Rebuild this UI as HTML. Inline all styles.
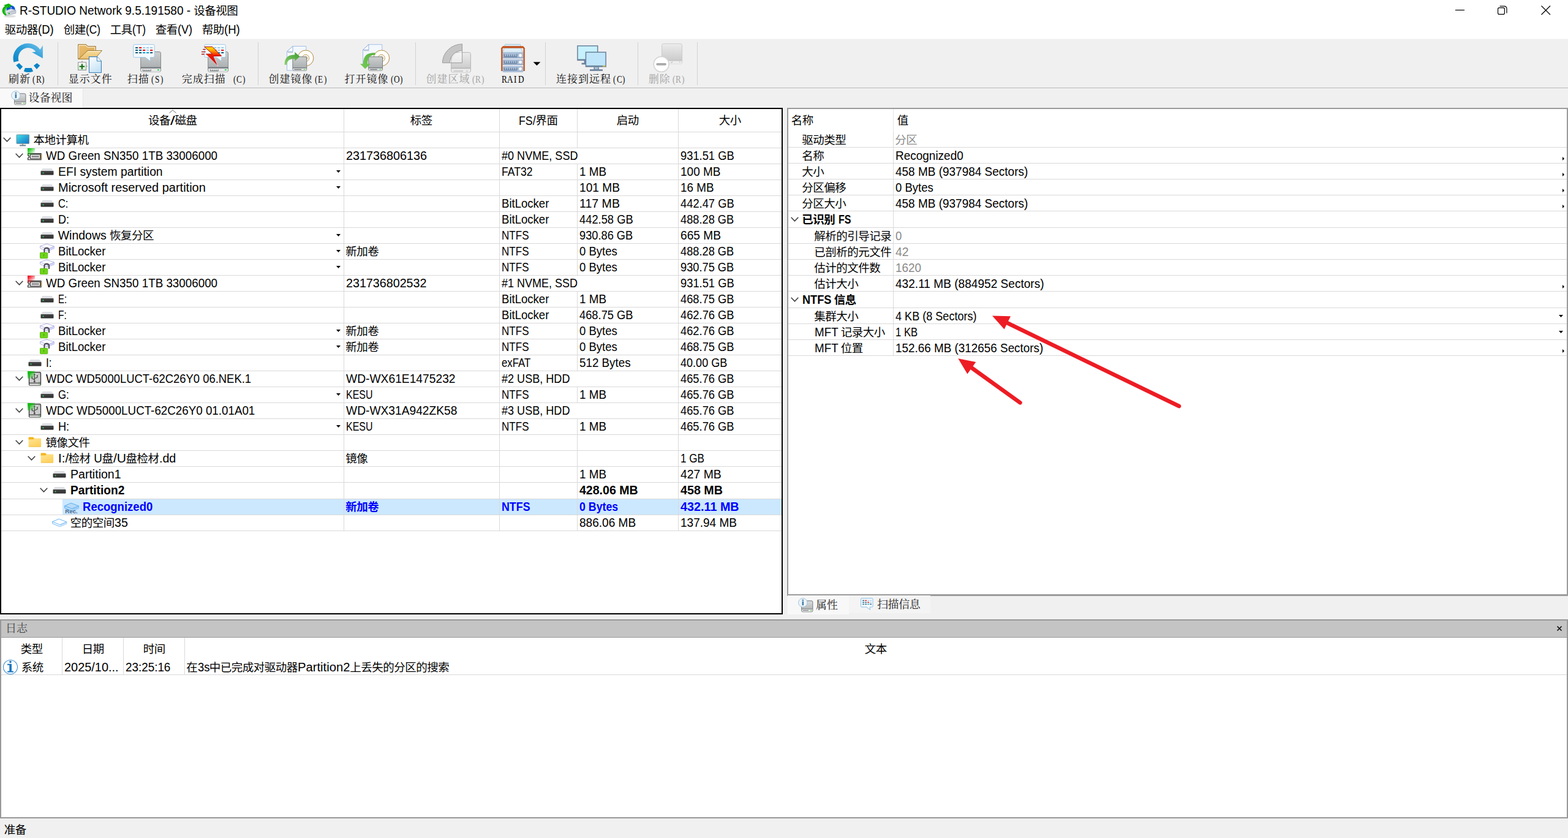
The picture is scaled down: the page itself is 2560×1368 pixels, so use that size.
<!DOCTYPE html>
<html lang="zh"><head><meta charset="utf-8"><title>R-STUDIO Network</title>
<style>
html,body{margin:0;padding:0}
body{width:2560px;height:1368px;position:relative;overflow:hidden;background:#fff;font-family:"Liberation Sans",sans-serif;font-size:19.5px;color:#000}
body>div,body>span,body>svg{position:absolute}
body>span{white-space:pre;line-height:24px;height:24px;transform-origin:0 0;display:block}
body>svg{overflow:visible}
body>span.cj{font-family:"Liberation Sans","Noto Sans CJK SC",sans-serif;font-size:18.5px;letter-spacing:-0.5px}
body>span.cs{font-family:"Liberation Serif","Noto Serif CJK SC",serif;font-size:17px;letter-spacing:1px;color:#111}
body>span.ct{font-family:"Liberation Serif","Noto Serif CJK SC",serif;font-size:18px;color:#222}
</style></head><body>
<div style="left:0px;top:63px;width:2560px;height:1px;background:#f8f8f8;"></div>
<div style="left:0px;top:64px;width:2560px;height:80px;background:#f0f0f0;"></div>
<div style="left:0px;top:143px;width:2560px;height:1px;background:#b9b9b9;"></div>
<div style="left:0px;top:144px;width:2560px;height:32px;background:#f0f0f0;"></div>
<div style="left:0px;top:144.5px;width:135px;height:30.5px;background:#f9f9f9;"></div>
<div style="left:0px;top:175px;width:135px;height:1px;background:#fff;"></div>
<div style="left:135px;top:145px;width:1px;height:30px;background:#e6e6e6;"></div>
<div style="left:1278px;top:176px;width:8px;height:836px;background:#f0f0f0;"></div>
<div style="left:0px;top:176px;width:1278px;height:827px;background:#fff;box-sizing:border-box;border:2px solid #000"></div>
<div style="left:1285px;top:176px;width:1275px;height:797px;background:#fff;box-sizing:border-box;border:2px solid #9b9b9b;border-bottom-width:3px"></div>
<div style="left:1278px;top:973px;width:1282px;height:39px;background:#f0f0f0;"></div>
<div style="left:1286px;top:972px;width:100px;height:31px;background:#f8f8f8;"></div>
<div style="left:1386px;top:972px;width:133px;height:29px;background:#f4f4f4;"></div>
<div style="left:0px;top:1003px;width:1286px;height:9px;background:#f0f0f0;"></div>
<div style="left:0px;top:1011px;width:2560px;height:325px;background:#fff;box-sizing:border-box;border:2px solid #989898"></div>
<div style="left:2px;top:1013px;width:2556px;height:27px;background:#c4c4c4;"></div>
<div style="left:2px;top:1040px;width:2556px;height:1px;background:#9a9a9a;"></div>
<div style="left:0px;top:1336px;width:2560px;height:32px;background:#f0f0f0;"></div>
<span style="left:32px;top:4.6px;font-size:19.6px;transform:scaleX(0.9709);">R-STUDIO Network 9.5.191580 - </span>
<span class="cj" style="left:316.25px;top:6.4px;">设备视图</span>
<svg style="left:2376px;top:9px;" width="160" height="16" viewBox="0 0 160 16"><path d="M0 7.5h15" stroke="#000" stroke-width="1.2" fill="none"/><rect x="69.6" y="3.6" width="10.8" height="10.8" rx="2.2" fill="none" stroke="#000" stroke-width="1.2"/><path d="M72.6 1.1 h7.4 a4 4 0 0 1 4 4 v7.4" fill="none" stroke="#000" stroke-width="1.2"/><path d="M140.5 0.5 l14.5 14.5 M155 0.5 l-14.5 14.5" stroke="#000" stroke-width="1.2" fill="none"/></svg>
<span class="cj" style="left:7.75px;top:36.6px;">驱动器</span>
<span style="left:62px;top:36px;transform:scaleX(0.9446);">(D)</span>
<span class="cj" style="left:103.75px;top:36.6px;">创建</span>
<span style="left:140px;top:36px;transform:scaleX(0.8852);">(C)</span>
<span class="cj" style="left:179.75px;top:36.6px;">工具</span>
<span style="left:216px;top:36px;transform:scaleX(0.8874);">(T)</span>
<span class="cj" style="left:253.75px;top:36.6px;">查看</span>
<span style="left:290px;top:36px;transform:scaleX(0.9248);">(V)</span>
<span class="cj" style="left:329.75px;top:36.6px;">帮助</span>
<span style="left:366px;top:36px;transform:scaleX(0.9510);">(H)</span>
<div style="left:94px;top:69px;width:1px;height:70px;background:#d2d2d2;"></div>
<div style="left:421px;top:69px;width:1px;height:70px;background:#d2d2d2;"></div>
<div style="left:678px;top:69px;width:1px;height:70px;background:#d2d2d2;"></div>
<div style="left:890px;top:69px;width:1px;height:70px;background:#d2d2d2;"></div>
<div style="left:1041px;top:69px;width:1px;height:70px;background:#d2d2d2;"></div>
<div style="left:1138px;top:69px;width:1px;height:70px;background:#d2d2d2;"></div>
<svg style="left:0px;top:0px;" width="1200" height="144" viewBox="0 0 1200 144"><defs><linearGradient id="rf" x1="0" y1="1" x2="1" y2="0"><stop offset="0" stop-color="#0a84c6"/><stop offset="0.55" stop-color="#2f9fd8"/><stop offset="1" stop-color="#78c4ec"/></linearGradient><linearGradient id="dr" x1="0" y1="0" x2="0" y2="1"><stop offset="0" stop-color="#cdcfd0"/><stop offset="1" stop-color="#a4a8aa"/></linearGradient><linearGradient id="drd" x1="0" y1="0" x2="0" y2="1"><stop offset="0" stop-color="#ececec"/><stop offset="1" stop-color="#c4c4c4"/></linearGradient><linearGradient id="fo" x1="0" y1="0" x2="1" y2="1"><stop offset="0" stop-color="#ecc070"/><stop offset="1" stop-color="#d9a653"/></linearGradient><linearGradient id="fo2" x1="0" y1="0" x2="0" y2="1"><stop offset="0" stop-color="#f6dc9a"/><stop offset="1" stop-color="#ecc070"/></linearGradient><linearGradient id="pg" x1="0" y1="0" x2="0.5" y2="1"><stop offset="0" stop-color="#ffffff"/><stop offset="1" stop-color="#c7e3f6"/></linearGradient><linearGradient id="pl" x1="0" y1="0" x2="0" y2="1"><stop offset="0" stop-color="#ffffff"/><stop offset="1" stop-color="#d2f3d0"/></linearGradient><linearGradient id="bo" x1="0" y1="0" x2="0" y2="1"><stop offset="0" stop-color="#ffe600"/><stop offset="0.2" stop-color="#ffa000"/><stop offset="0.45" stop-color="#f01800"/><stop offset="1" stop-color="#c00000"/></linearGradient><linearGradient id="ga" x1="0" y1="1" x2="1" y2="0"><stop offset="0" stop-color="#8fd070"/><stop offset="1" stop-color="#3d9a2f"/></linearGradient><linearGradient id="gb" x1="1" y1="0" x2="0" y2="1"><stop offset="0" stop-color="#58b040"/><stop offset="1" stop-color="#78cc58"/></linearGradient><radialGradient id="cd" cx="0.35" cy="0.3" r="0.9"><stop offset="0" stop-color="#fffdf2"/><stop offset="0.6" stop-color="#ffffff"/><stop offset="1" stop-color="#fbe6e6"/></radialGradient></defs><path d="M22.4 101.6A24.2 24.2 0 0 1 65.4 81L69.9 74V95.2L52.2 85.2L58.4 84.4A16 16.8 0 0 0 30.5 99.5Z" fill="url(#rf)"/><path d="M26.2 106.6L31.1 103L37.2 108.8L32.5 114Z" fill="#0a84c6"/><path d="M55 107L60.3 103L65.3 107L59.9 113Z" fill="#0a84c6"/><path d="M40.9 111H51.5L54.1 116.4Q46.4 119.6 38.8 116.4Z" fill="#0a84c6"/><path d="M127.6 72.6H140.6L143.2 75.6H156.2V96.4H127.6Z" fill="url(#fo)" stroke="#9c7832" stroke-width="1"/><path d="M129 74H140L142.6 77H154.8V83" fill="none" stroke="#fff" stroke-width="1" opacity="0.9"/><path d="M128.6 74V95" stroke="#fff" stroke-width="1" opacity="0.8"/><path d="M143 82.6H166.4L154.6 96.4H128.2Z" fill="url(#fo2)" stroke="#9c7832" stroke-width="1"/><path d="M143.6 83.8H164L162.8 85" fill="none" stroke="#fff" stroke-width="0.9" opacity="0.9"/><path d="M145.5 92.6H158.4L165.4 99.8V118.5H145.5Z" fill="url(#pg)" stroke="#3f7fb2" stroke-width="1.1"/><path d="M158.4 92.6V99.8H165.4" fill="#fff" stroke="#3f7fb2" stroke-width="1"/><rect x="127.6" y="101.8" width="13" height="12.6" fill="url(#pl)" stroke="#8c8c8c" stroke-width="1"/><path d="M129.6 108.6h8.6M133.9 104.2v8.8" stroke="#0b670b" stroke-width="2"/><path d="M134 99.4v2M141.2 108h1.6" stroke="#8c8c8c" stroke-width="1.2"/><rect x="229.7" y="84.5" width="32.8" height="32.8" rx="2.6" fill="url(#dr)" stroke="#868a8c" stroke-width="1"/><rect x="229.7" y="109.6" width="32.8" height="2.2" fill="#70767a"/><path d="M230.2 111.8h31.799999999999997v2.6a3 3 0 0 1-3 3h-25.799999999999997a3 3 0 0 1-3-3z" fill="#e6e8e8"/><path d="M233.5 113.2v2.6h12.6v-2.6M236.6 113.4v2.2M239.8 113.4v2.2M242.9 113.4v2.2" fill="none" stroke="#6c7072" stroke-width="1.1"/><rect x="256.9" y="113.2" width="3" height="1.8" rx="0.5" fill="#19d24a"/><path d="M219.7 72.6h30.5a2 2 0 0 1 2 2v17a2 2 0 0 1-2 2h-4.8v6.2l-8.2-6.2h-17.5a2 2 0 0 1-2-2v-17a2 2 0 0 1 2-2z" fill="#f5fafd" stroke="#9ccbea" stroke-width="1"/><rect x="221.1" y="77.0" width="4.1" height="2" fill="#0b5876"/><rect x="227.1" y="77.0" width="4.1" height="2" fill="#e80000"/><rect x="233.1" y="77.0" width="4.1" height="2" fill="#9ccbe8"/><rect x="239.1" y="77.0" width="4.1" height="2" fill="#9ccbe8"/><rect x="245.1" y="77.0" width="4.1" height="2" fill="#9ccbe8"/><rect x="221.1" y="81.0" width="4.1" height="2" fill="#0b5876"/><rect x="227.1" y="81.0" width="4.1" height="2" fill="#0b5876"/><rect x="233.1" y="81.0" width="4.1" height="2" fill="#e80000"/><rect x="239.1" y="81.0" width="4.1" height="2" fill="#9ccbe8"/><rect x="245.1" y="81.0" width="4.1" height="2" fill="#e80000"/><rect x="221.1" y="85.1" width="4.1" height="2" fill="#0b5876"/><rect x="227.1" y="85.1" width="4.1" height="2" fill="#0b5876"/><rect x="233.1" y="85.1" width="4.1" height="2" fill="#0a9ad2"/><rect x="239.1" y="85.1" width="4.1" height="2" fill="#0a9ad2"/><rect x="245.1" y="85.1" width="4.1" height="2" fill="#0b5876"/><rect x="339.7" y="84.5" width="32.8" height="32.8" rx="2.6" fill="url(#dr)" stroke="#868a8c" stroke-width="1"/><rect x="339.7" y="109.6" width="32.8" height="2.2" fill="#70767a"/><path d="M340.2 111.8h31.799999999999997v2.6a3 3 0 0 1-3 3h-25.799999999999997a3 3 0 0 1-3-3z" fill="#e6e8e8"/><path d="M343.5 113.2v2.6h12.6v-2.6M346.6 113.4v2.2M349.8 113.4v2.2M352.9 113.4v2.2" fill="none" stroke="#6c7072" stroke-width="1.1"/><rect x="366.9" y="113.2" width="3" height="1.8" rx="0.5" fill="#19d24a"/><path d="M335.8 72.6h30.5a2 2 0 0 1 2 2v17a2 2 0 0 1-2 2h-4.8v6.2l-8.2-6.2h-17.5a2 2 0 0 1-2-2v-17a2 2 0 0 1 2-2z" fill="#f5fafd" stroke="#9ccbea" stroke-width="1"/><rect x="349.2" y="77.0" width="4.1" height="2" fill="#9ccbe8"/><rect x="355.2" y="77.0" width="4.1" height="2" fill="#9ccbe8"/><rect x="361.2" y="77.0" width="4.1" height="2" fill="#9ccbe8"/><rect x="349.2" y="81.0" width="4.1" height="2" fill="#e80000"/><rect x="355.2" y="81.0" width="4.1" height="2" fill="#9ccbe8"/><rect x="361.2" y="81.0" width="4.1" height="2" fill="#e80000"/><rect x="349.2" y="85.1" width="4.1" height="2" fill="#0a9ad2"/><rect x="355.2" y="85.1" width="4.1" height="2" fill="#0a9ad2"/><rect x="361.2" y="85.1" width="4.1" height="2" fill="#0b5876"/><path d="M333.8 76.4H346.6L361.6 91.2L348.3 91.7L355.4 107.6L336.2 88.3L346.6 88Z" fill="url(#bo)" stroke="#b00808" stroke-width="1" stroke-linejoin="miter"/><path d="M349 92.6L355.9 108.2L337 89.2" fill="none" stroke="#fff" stroke-width="0.9" opacity="0.85"/><path d="M331.2 80.6h4.6M329 84.7h6.7M329 88.5h4.6" stroke="#b01010" stroke-width="1.3"/><path d="M478 75.5H499.8V115H468.5V84.2Z" fill="#f3f8fd" stroke="#a4c0e6" stroke-width="1"/><path d="M468.5 84.2H478V75.5Z" fill="#fff" stroke="#8fb0dc" stroke-width="1"/><path d="M470 85.6H478.6" stroke="#c6c6c6" stroke-width="1.2"/><circle cx="499" cy="94.9" r="12.9" fill="url(#cd)" stroke="#b08c40" stroke-width="1"/><circle cx="499" cy="94.9" r="5.6" fill="#fff" stroke="#b08c40" stroke-width="0.9"/><circle cx="499" cy="94.9" r="2.8" fill="#f0f0f0" stroke="#b08c40" stroke-width="0.8"/><rect x="477.9" y="92.7" width="22.8" height="22.6" rx="2.2" fill="url(#dr)" stroke="#7c8082" stroke-width="1"/><rect x="478.0" y="110.2" width="22.6" height="1.4" fill="#6e7476"/><path d="M478.4 111.6h21.8v1.6a2 2 0 0 1-2 2h-17.8a2 2 0 0 1-2-2z" fill="#dcdede"/><path d="M480.4 113.4h11.6" stroke="#5e6264" stroke-width="1.1"/><rect x="495.79999999999995" y="112.80000000000001" width="2.6" height="1.2" fill="#5fd64a"/><path d="M464.6 105.8C464.6 95 469 89.8 481.2 89.6V85L489.5 92.3L481.2 99.7V96C472.5 96 468.6 99 468.4 105.8Z" fill="url(#ga)"/><path d="M602 72.7H623.8V106.2H592.5V81.4Z" fill="#f3f8fd" stroke="#a4c0e6" stroke-width="1"/><path d="M592.5 81.4H602V72.7Z" fill="#fff" stroke="#8fb0dc" stroke-width="1"/><path d="M594 82.8H602.6" stroke="#c6c6c6" stroke-width="1.2"/><circle cx="622.8" cy="94.9" r="12.9" fill="url(#cd)" stroke="#b08c40" stroke-width="1"/><circle cx="622.8" cy="94.9" r="5.6" fill="#fff" stroke="#b08c40" stroke-width="0.9"/><circle cx="622.8" cy="94.9" r="2.8" fill="#f0f0f0" stroke="#b08c40" stroke-width="0.8"/><rect x="601.7" y="92.7" width="22.8" height="22.6" rx="2.2" fill="url(#dr)" stroke="#7c8082" stroke-width="1"/><rect x="601.8000000000001" y="110.2" width="22.6" height="1.4" fill="#6e7476"/><path d="M602.2 111.6h21.8v1.6a2 2 0 0 1-2 2h-17.8a2 2 0 0 1-2-2z" fill="#dcdede"/><path d="M604.2 113.4h11.6" stroke="#5e6264" stroke-width="1.1"/><rect x="619.6" y="112.80000000000001" width="2.6" height="1.2" fill="#5fd64a"/><path d="M612.6 86.4C600 86 593.4 90 592.8 104.3H588L596.2 112.4L604.8 104.3H600C600.4 94 604 89.8 612.6 89.6Z" fill="url(#gb)"/><rect x="736.8" y="85.6" width="31.6" height="32.4" rx="2.6" fill="url(#drd)" stroke="#b4b4b4" stroke-width="1"/><rect x="736.8" y="110.3" width="31.6" height="2.2" fill="#bdbdbd"/><path d="M737.3 112.5h30.6v2.6a3 3 0 0 1-3 3h-24.6a3 3 0 0 1-3-3z" fill="#ededed"/><path d="M740.4 116h15.6" stroke="#b8b8b8" stroke-width="1.4"/><rect x="760.6" y="115.4" width="3.6" height="1.3" fill="#c4c4c4"/><path d="M722.4 102.6A32.4 30.9 0 0 1 754.6 71.9V82.5A20.6 20.2 0 0 0 734.2 102.6Z" fill="#c6c6c6" stroke="#9c9c9c" stroke-width="1"/><path d="M754.6 82.5V102.6H734.2" fill="none" stroke="#9c9c9c" stroke-width="1"/><path d="M736.6 102A18.4 18 0 0 1 754 84.6V102Z" fill="#fff" opacity="0.45"/><path d="M824.6 72.4h24.8l0.9 3h-26.6z" fill="#deeef7" stroke="#9ebfd6" stroke-width="0.9"/><path d="M823.6 78.4h26.8l3.2 7h-33.2z" fill="#deeef7" stroke="#9ebfd6" stroke-width="0.9"/><rect x="820.4" y="86" width="34.2" height="30" fill="#fff"/><rect x="820.4" y="85.9" width="34.2" height="9.4" rx="0.6" fill="#a9bdd7"/><rect x="820.4" y="94.00000000000001" width="34.2" height="1.3" fill="#8ea6c4" opacity="1"/><path d="M823.4 88.30000000000001v4.3h20.4v-4.3M826.8 88.9v3.4M830.2 88.9v3.4M833.6 88.9v3.4M837 88.9v3.4M840.4 88.9v3.4" fill="none" stroke="#607a9a" stroke-width="1.2"/><circle cx="849.6" cy="90.5" r="2.4" fill="#fff"/><rect x="820.4" y="96.8" width="34.2" height="9.4" rx="0.6" fill="#a9bdd7"/><rect x="820.4" y="104.9" width="34.2" height="1.3" fill="#8ea6c4" opacity="1"/><path d="M823.4 99.2v4.3h20.4v-4.3M826.8 99.8v3.4M830.2 99.8v3.4M833.6 99.8v3.4M837 99.8v3.4M840.4 99.8v3.4" fill="none" stroke="#607a9a" stroke-width="1.2"/><circle cx="849.6" cy="101.39999999999999" r="2.4" fill="#fff"/><rect x="820.4" y="107.8" width="34.2" height="10.2" rx="2.2" fill="#a9bdd7"/><rect x="820.4" y="116.7" width="34.2" height="1.3" fill="#8ea6c4" opacity="0"/><path d="M823.4 110.2v4.3h20.4v-4.3M826.8 110.8v3.4M830.2 110.8v3.4M833.6 110.8v3.4M837 110.8v3.4M840.4 110.8v3.4" fill="none" stroke="#607a9a" stroke-width="1.2"/><circle cx="849.6" cy="112.39999999999999" r="2.4" fill="#fff"/><path d="M818.2 116V78.2l2.9-2.9h32.8l2.9 2.9V116h-2.3V79.6l-1-1.2h-32l-1 1.2V116z" fill="#c4511b"/><path d="M870.6 101.2h11.8l-5.9 5.9z" fill="#000"/><rect x="942.2" y="74.1" width="34.3" height="25" fill="#6a819c"/><rect x="943.7" y="75.6" width="31.299999999999997" height="20.9" fill="#c7f1fc"/><rect x="949.6" y="102.7" width="8" height="2.6" fill="#6a819c"/><rect x="953.6" y="99" width="3" height="4" fill="#6a819c"/><rect x="955.7" y="84.5" width="34.2" height="25" fill="#6a819c"/><rect x="957.2" y="86.0" width="31.200000000000003" height="20.9" fill="#bfe5fb"/><rect x="984" y="107.2" width="4.4" height="1.3" fill="#e6cf22"/><rect x="969.4" y="109.5" width="8.4" height="3.8" fill="#6a819c"/><rect x="971" y="110.2" width="5.2" height="2.4" fill="#b4cde6"/><rect x="963" y="113.2" width="21" height="2.6" fill="#6a819c"/><rect x="1080.6" y="71.3" width="33" height="33" rx="3" fill="url(#drd)" stroke="#c4c4c4" stroke-width="0.8"/><rect x="1081" y="98" width="32.2" height="1.6" fill="#c2c2c2"/><path d="M1081 99.6h32.2v1.8a3 3 0 0 1-3 3h-26.2a3 3 0 0 1-3-3z" fill="#eeeeee"/><path d="M1097.4 100.4v1.8h-2.4" fill="none" stroke="#b8b8b8" stroke-width="0.9"/><rect x="1108.6" y="100.6" width="2.4" height="1.2" fill="#c8c8c8"/><circle cx="1079.7" cy="104.8" r="12.4" fill="#fff" stroke="#d4d4d4" stroke-width="1.6"/><rect x="1071.3" y="103.1" width="16.6" height="3.6" rx="1.8" fill="#a9a9a9"/></svg>
<svg style="left:0px;top:0px;" width="32" height="34" viewBox="0 0 32 34"><defs><linearGradient id="ti1" x1="0" y1="0" x2="1" y2="1"><stop offset="0" stop-color="#f4f6fa"/><stop offset="1" stop-color="#b4bac8"/></linearGradient></defs><ellipse cx="16" cy="26.5" rx="10" ry="2" fill="#000" opacity="0.12"/><path d="M10.4 17C10 11 15 8.6 19.6 9.2C23.4 9.8 25 13.4 24.6 16.4L17 19Z" fill="#0a55d4"/><path d="M7.4 18.6L18 14.2L26 16.8V21.6L11.4 25.4L7.4 22.6Z" fill="url(#ti1)" stroke="#9aa2b4" stroke-width="0.6"/><path d="M11.4 21.2L26 16.8" stroke="#8a92a4" stroke-width="0.6" fill="none"/><rect x="13.8" y="21" width="2" height="2" fill="#12c012"/><rect x="17.4" y="12" width="1.6" height="1.2" fill="#fff"/><path d="M9.8 25.8C3 23 0.8 14.4 8.4 9.4L5.8 8.4L14.2 5.8L18.8 8.4L14.6 13.6L13.4 11.6C7.4 15 7.6 20 10.6 24Z" fill="#0ab20a"/><path d="M8.2 22C5.6 17.6 7 13 12.6 10.4" stroke="#6fe04a" stroke-width="0.8" fill="none"/></svg>
<svg style="left:18px;top:147.6px;" width="28" height="26" viewBox="0 0 28 26"><defs><linearGradient id="g1" x1="0" y1="0" x2="0" y2="1"><stop offset="0" stop-color="#dddedf"/><stop offset="1" stop-color="#a6a9ab"/></linearGradient></defs><rect x="5.7" y="4.8" width="18.2" height="18" rx="2" fill="url(#g1)" stroke="#73797d" stroke-width="1"/><path d="M6.2 18.4h17.2v2.4a1.6 1.6 0 0 1-1.6 1.6h-14a1.6 1.6 0 0 1-1.6-1.6z" fill="#e9e9e9"/><path d="M5.8 18.2h18" stroke="#73797d" stroke-width="0.9"/><path d="M7.6 20.6h9.4" stroke="#6e7274" stroke-width="1"/><rect x="20" y="20" width="2.4" height="1.2" fill="#5fd64a"/><circle cx="7.8" cy="7.8" r="7.2" fill="#eef4f8" stroke="#9fc4de" stroke-width="1"/><rect x="6.6" y="5.7" width="2.5" height="6.5" fill="#3b7ca8"/><rect x="6.6" y="2.8" width="2.5" height="1.9" fill="#3b7ca8"/></svg>
<svg style="left:1303px;top:975.6px;" width="28" height="26" viewBox="0 0 28 26"><defs><linearGradient id="g2" x1="0" y1="0" x2="0" y2="1"><stop offset="0" stop-color="#dddedf"/><stop offset="1" stop-color="#a6a9ab"/></linearGradient></defs><rect x="5.7" y="4.8" width="18.2" height="18" rx="2" fill="url(#g2)" stroke="#73797d" stroke-width="1"/><path d="M6.2 18.4h17.2v2.4a1.6 1.6 0 0 1-1.6 1.6h-14a1.6 1.6 0 0 1-1.6-1.6z" fill="#e9e9e9"/><path d="M5.8 18.2h18" stroke="#73797d" stroke-width="0.9"/><path d="M7.6 20.6h9.4" stroke="#6e7274" stroke-width="1"/><rect x="20" y="20" width="2.4" height="1.2" fill="#5fd64a"/><circle cx="7.8" cy="7.8" r="7.2" fill="#eef4f8" stroke="#9fc4de" stroke-width="1"/><rect x="6.6" y="5.7" width="2.5" height="6.5" fill="#3b7ca8"/><rect x="6.6" y="2.8" width="2.5" height="1.9" fill="#3b7ca8"/></svg>
<svg style="left:1405px;top:976px;" width="24" height="22" viewBox="0 0 24 22"><path d="M2 0.6h16.6a1.4 1.4 0 0 1 1.4 1.4v11.6a1.4 1.4 0 0 1-1.4 1.4h-3.2v4.4l-5.6-4.4h-7.8a1.4 1.4 0 0 1-1.4-1.4v-11.6a1.4 1.4 0 0 1 1.4-1.4z" fill="#f4f9fc" stroke="#8cc0e6" stroke-width="1"/><rect x="3.2" y="3.6" width="2.8" height="1.3" fill="#0b5876"/><rect x="7.2" y="3.6" width="2.8" height="1.3" fill="#e80000"/><rect x="11.2" y="3.6" width="2.8" height="1.3" fill="#9ccbe8"/><rect x="15.2" y="3.6" width="2.8" height="1.3" fill="#9ccbe8"/><rect x="3.2" y="6.6" width="2.8" height="1.3" fill="#0b5876"/><rect x="7.2" y="6.6" width="2.8" height="1.3" fill="#0b5876"/><rect x="11.2" y="6.6" width="2.8" height="1.3" fill="#e80000"/><rect x="15.2" y="6.6" width="2.8" height="1.3" fill="#9ccbe8"/><rect x="3.2" y="9.6" width="2.8" height="1.3" fill="#0b5876"/><rect x="7.2" y="9.6" width="2.8" height="1.3" fill="#0b5876"/><rect x="11.2" y="9.6" width="2.8" height="1.3" fill="#0a9ad2"/><rect x="15.2" y="9.6" width="2.8" height="1.3" fill="#0b5876"/></svg>
<span class="cs" style="left:14px;top:117.7px;">刷新</span>
<span style="left:53.29px;top:117.5px;font-family:'Liberation Serif',serif;font-size:17px;color:#111;transform:scaleX(0.7800);">(</span>
<span style="left:58.58px;top:117.5px;font-family:'Liberation Serif',serif;font-size:17px;color:#111;transform:scaleX(0.7800);">R</span>
<span style="left:68.29px;top:117.5px;font-family:'Liberation Serif',serif;font-size:17px;color:#111;transform:scaleX(0.7800);">)</span>
<span class="cs" style="left:111.75px;top:117.7px;">显示文件</span>
<span class="cs" style="left:207.75px;top:117.7px;">扫描</span>
<span style="left:247.04px;top:117.5px;font-family:'Liberation Serif',serif;font-size:17px;color:#111;transform:scaleX(0.7800);">(</span>
<span style="left:253.06px;top:117.5px;font-family:'Liberation Serif',serif;font-size:17px;color:#111;transform:scaleX(0.7800);">S</span>
<span style="left:262.04px;top:117.5px;font-family:'Liberation Serif',serif;font-size:17px;color:#111;transform:scaleX(0.7800);">)</span>
<span class="cs" style="left:296.8px;top:117.7px;">完成扫描</span>
<span style="left:381.09px;top:117.5px;font-family:'Liberation Serif',serif;font-size:17px;color:#111;transform:scaleX(0.7800);">(</span>
<span style="left:386.38px;top:117.5px;font-family:'Liberation Serif',serif;font-size:17px;color:#111;transform:scaleX(0.7800);">C</span>
<span style="left:396.09px;top:117.5px;font-family:'Liberation Serif',serif;font-size:17px;color:#111;transform:scaleX(0.7800);">)</span>
<span class="cs" style="left:438.5px;top:117.7px;">创建镜像</span>
<span style="left:513.79px;top:117.5px;font-family:'Liberation Serif',serif;font-size:17px;color:#111;transform:scaleX(0.7800);">(</span>
<span style="left:519.45px;top:117.5px;font-family:'Liberation Serif',serif;font-size:17px;color:#111;transform:scaleX(0.7800);">E</span>
<span style="left:528.79px;top:117.5px;font-family:'Liberation Serif',serif;font-size:17px;color:#111;transform:scaleX(0.7800);">)</span>
<span class="cs" style="left:562.5px;top:117.7px;">打开镜像</span>
<span style="left:637.79px;top:117.5px;font-family:'Liberation Serif',serif;font-size:17px;color:#111;transform:scaleX(0.7800);">(</span>
<span style="left:642.71px;top:117.5px;font-family:'Liberation Serif',serif;font-size:17px;color:#111;transform:scaleX(0.7800);">O</span>
<span style="left:652.79px;top:117.5px;font-family:'Liberation Serif',serif;font-size:17px;color:#111;transform:scaleX(0.7800);">)</span>
<span class="cs" style="left:695.6px;top:117.7px;color:#a4a4a4;">创建区域</span>
<span style="left:770.89px;top:117.5px;font-family:'Liberation Serif',serif;font-size:17px;color:#a4a4a4;transform:scaleX(0.7800);">(</span>
<span style="left:776.18px;top:117.5px;font-family:'Liberation Serif',serif;font-size:17px;color:#a4a4a4;transform:scaleX(0.7800);">R</span>
<span style="left:785.89px;top:117.5px;font-family:'Liberation Serif',serif;font-size:17px;color:#a4a4a4;transform:scaleX(0.7800);">)</span>
<span style="left:819.08px;top:117.5px;font-family:'Liberation Serif',serif;font-size:17px;transform:scaleX(0.7800);">R</span>
<span style="left:827.71px;top:117.5px;font-family:'Liberation Serif',serif;font-size:17px;transform:scaleX(0.7800);">A</span>
<span style="left:839.29px;top:117.5px;font-family:'Liberation Serif',serif;font-size:17px;transform:scaleX(0.7800);">I</span>
<span style="left:845.71px;top:117.5px;font-family:'Liberation Serif',serif;font-size:17px;transform:scaleX(0.7800);">D</span>
<span class="cs" style="left:908px;top:117.7px;">连接到远程</span>
<span style="left:1001.29px;top:117.5px;font-family:'Liberation Serif',serif;font-size:17px;color:#111;transform:scaleX(0.7800);">(</span>
<span style="left:1006.58px;top:117.5px;font-family:'Liberation Serif',serif;font-size:17px;color:#111;transform:scaleX(0.7800);">C</span>
<span style="left:1016.29px;top:117.5px;font-family:'Liberation Serif',serif;font-size:17px;color:#111;transform:scaleX(0.7800);">)</span>
<span class="cs" style="left:1058.7px;top:117.7px;color:#a4a4a4;">删除</span>
<span style="left:1097.99px;top:117.5px;font-family:'Liberation Serif',serif;font-size:17px;color:#a4a4a4;transform:scaleX(0.7800);">(</span>
<span style="left:1103.28px;top:117.5px;font-family:'Liberation Serif',serif;font-size:17px;color:#a4a4a4;transform:scaleX(0.7800);">R</span>
<span style="left:1112.99px;top:117.5px;font-family:'Liberation Serif',serif;font-size:17px;color:#a4a4a4;transform:scaleX(0.7800);">)</span>
<span class="ct" style="left:46.5px;top:148.4px;">设备视图</span>
<div style="left:102px;top:815px;width:1174px;height:25px;background:#cce8ff;"></div>
<div style="left:2px;top:215px;width:1274px;height:1px;background:#d9d9d9;"></div>
<div style="left:2px;top:241px;width:1274px;height:1px;background:#d9d9d9;"></div>
<div style="left:2px;top:267px;width:1274px;height:1px;background:#d9d9d9;"></div>
<div style="left:2px;top:293px;width:1274px;height:1px;background:#d9d9d9;"></div>
<div style="left:2px;top:319px;width:1274px;height:1px;background:#d9d9d9;"></div>
<div style="left:2px;top:345px;width:1274px;height:1px;background:#d9d9d9;"></div>
<div style="left:2px;top:371px;width:1274px;height:1px;background:#d9d9d9;"></div>
<div style="left:2px;top:397px;width:1274px;height:1px;background:#d9d9d9;"></div>
<div style="left:2px;top:423px;width:1274px;height:1px;background:#d9d9d9;"></div>
<div style="left:2px;top:449px;width:1274px;height:1px;background:#d9d9d9;"></div>
<div style="left:2px;top:475px;width:1274px;height:1px;background:#d9d9d9;"></div>
<div style="left:2px;top:501px;width:1274px;height:1px;background:#d9d9d9;"></div>
<div style="left:2px;top:527px;width:1274px;height:1px;background:#d9d9d9;"></div>
<div style="left:2px;top:553px;width:1274px;height:1px;background:#d9d9d9;"></div>
<div style="left:2px;top:579px;width:1274px;height:1px;background:#d9d9d9;"></div>
<div style="left:2px;top:605px;width:1274px;height:1px;background:#d9d9d9;"></div>
<div style="left:2px;top:631px;width:1274px;height:1px;background:#d9d9d9;"></div>
<div style="left:2px;top:657px;width:1274px;height:1px;background:#d9d9d9;"></div>
<div style="left:2px;top:683px;width:1274px;height:1px;background:#d9d9d9;"></div>
<div style="left:2px;top:709px;width:1274px;height:1px;background:#d9d9d9;"></div>
<div style="left:2px;top:735px;width:1274px;height:1px;background:#d9d9d9;"></div>
<div style="left:2px;top:761px;width:1274px;height:1px;background:#d9d9d9;"></div>
<div style="left:2px;top:787px;width:1274px;height:1px;background:#d9d9d9;"></div>
<div style="left:2px;top:814px;width:1274px;height:1px;background:#d9d9d9;"></div>
<div style="left:2px;top:840px;width:1274px;height:1px;background:#d9d9d9;"></div>
<div style="left:2px;top:866px;width:1274px;height:1px;background:#d9d9d9;"></div>
<div style="left:561px;top:178px;width:1px;height:688px;background:#d9d9d9;"></div>
<div style="left:815px;top:178px;width:1px;height:688px;background:#d9d9d9;"></div>
<div style="left:942px;top:178px;width:1px;height:688px;background:#d9d9d9;"></div>
<div style="left:1107px;top:178px;width:1px;height:688px;background:#d9d9d9;"></div>
<div style="left:942px;top:242px;width:1px;height:25px;background:#fff;"></div>
<div style="left:942px;top:606px;width:1px;height:25px;background:#fff;"></div>
<div style="left:942px;top:658px;width:1px;height:25px;background:#fff;"></div>
<div style="left:942px;top:450px;width:1px;height:25px;background:#fff;"></div>
<span class="cj" style="left:241.93px;top:185.4px;">设备</span>
<span style="left:278.18px;top:184.5px;transform:scaleX(1.4115);">/</span>
<span class="cj" style="left:285.57px;top:185.4px;">磁盘</span>
<span class="cj" style="left:669.75px;top:185.4px;">标签</span>
<span style="left:847.19px;top:184.5px;transform:scaleX(0.9101);">FS/</span>
<span class="cj" style="left:874.56px;top:185.4px;">界面</span>
<span class="cj" style="left:1006.75px;top:185.4px;">启动</span>
<span class="cj" style="left:1173.75px;top:185.4px;">大小</span>
<svg style="left:276px;top:179px;" width="12" height="6" viewBox="0 0 12 6"><path d="M0.5 5.5L6 0.7L11.5 5.5" fill="none" stroke="#666" stroke-width="1"/></svg>
<svg style="left:5px;top:224px;" width="13" height="8" viewBox="0 0 13 8"><path d="M0.7 0.8L6.5 6.8L12.3 0.8" fill="none" stroke="#3c3c3c" stroke-width="1.5"/></svg>
<svg style="left:26px;top:218.5px;" width="23" height="20" viewBox="0 0 23 20"><defs><linearGradient id="g3" x1="0" y1="0" x2="1" y2="1"><stop offset="0" stop-color="#43e3ea"/><stop offset="0.5" stop-color="#2aa7d6"/><stop offset="1" stop-color="#1674c4"/></linearGradient></defs><rect x="1" y="0.9" width="20.6" height="14.6" rx="0.8" fill="url(#g3)" stroke="#8493a0" stroke-width="1"/><rect x="9.8" y="15.8" width="2.4" height="2" fill="#9aa7b2"/><rect x="6" y="17.6" width="10.2" height="1.9" rx="0.5" fill="#70808c"/></svg>
<span class="cj" style="left:54.45px;top:216.9px;">本地计算机</span>
<svg style="left:25px;top:250px;" width="13" height="8" viewBox="0 0 13 8"><path d="M0.7 0.8L6.5 6.8L12.3 0.8" fill="none" stroke="#3c3c3c" stroke-width="1.5"/></svg>
<svg style="left:45px;top:242px;" width="25" height="21" viewBox="0 0 25 21"><defs><linearGradient id="g4" x1="0" y1="0" x2="1" y2="1"><stop offset="0.08" stop-color="#00c400"/><stop offset="0.85" stop-color="#00c400" stop-opacity="0"/></linearGradient></defs><path d="M0.6 8.6h21.4v10.2h-21.4v-3l1.7-0.6v-2.8l-1.7-0.6z" fill="#f2f2f2" stroke="#1a1a1a" stroke-width="1.1"/><rect x="4.4" y="10.2" width="16.4" height="6.8" rx="0.8" fill="#fff" stroke="#1a1a1a" stroke-width="1.1"/><rect x="6.4" y="12.2" width="12.4" height="2.8" fill="#8c8c8c"/><path d="M23 10v2M23 12.8v2M23 15.6v2" stroke="#f0a020" stroke-width="1.1"/><rect x="0" y="0" width="12" height="11.5" fill="url(#g4)"/></svg>
<span style="left:74.7px;top:242px;transform:scaleX(0.9640);">WD Green SN350 1TB 33006000</span>
<span style="left:564.5px;top:242px;transform:scaleX(1.0149);">231736806136</span>
<span style="left:818.5px;top:242px;transform:scaleX(0.9266);">#0 NVME, SSD</span>
<span style="left:1110.5px;top:242px;transform:scaleX(0.9398);">931.51 GB</span>
<svg style="left:66px;top:274.3px;" width="22" height="13" viewBox="0 0 22 13"><defs><linearGradient id="g5" x1="0" y1="0" x2="0" y2="1"><stop offset="0" stop-color="#4a4a4a"/><stop offset="1" stop-color="#2b2b2b"/></linearGradient></defs><path d="M3.6 0.9h14.8l3.1 4.3h-21z" fill="#dddfe3"/><rect x="0.5" y="5" width="21" height="6.5" rx="0.8" fill="url(#g5)"/><rect x="0.7" y="11.4" width="20.6" height="0.7" fill="#000" opacity="0.2"/><rect x="3.6" y="7.4" width="1.9" height="1.9" rx="0.6" fill="#3fe05a"/></svg>
<span style="left:94.7px;top:268px;transform:scaleX(0.9902);">EFI system partition</span>
<svg style="left:549px;top:278px;" width="7" height="4" viewBox="0 0 7 4"><path d="M0 0h7l-3.5 4z" fill="#000"/></svg>
<span style="left:818.5px;top:268px;transform:scaleX(0.9023);">FAT32</span>
<span style="left:945.7px;top:268px;transform:scaleX(0.9663);">1 MB</span>
<span style="left:1110.5px;top:268px;transform:scaleX(0.9750);">100 MB</span>
<svg style="left:66px;top:300.3px;" width="22" height="13" viewBox="0 0 22 13"><defs><linearGradient id="g6" x1="0" y1="0" x2="0" y2="1"><stop offset="0" stop-color="#4a4a4a"/><stop offset="1" stop-color="#2b2b2b"/></linearGradient></defs><path d="M3.6 0.9h14.8l3.1 4.3h-21z" fill="#dddfe3"/><rect x="0.5" y="5" width="21" height="6.5" rx="0.8" fill="url(#g6)"/><rect x="0.7" y="11.4" width="20.6" height="0.7" fill="#000" opacity="0.2"/><rect x="3.6" y="7.4" width="1.9" height="1.9" rx="0.6" fill="#3fe05a"/></svg>
<span style="left:94.7px;top:294px;transform:scaleX(1.0239);">Microsoft reserved partition</span>
<svg style="left:549px;top:304px;" width="7" height="4" viewBox="0 0 7 4"><path d="M0 0h7l-3.5 4z" fill="#000"/></svg>
<span style="left:945.7px;top:294px;transform:scaleX(0.9810);">101 MB</span>
<span style="left:1110.5px;top:294px;transform:scaleX(0.9689);">16 MB</span>
<svg style="left:66px;top:326.3px;" width="22" height="13" viewBox="0 0 22 13"><defs><linearGradient id="g7" x1="0" y1="0" x2="0" y2="1"><stop offset="0" stop-color="#4a4a4a"/><stop offset="1" stop-color="#2b2b2b"/></linearGradient></defs><path d="M3.6 0.9h14.8l3.1 4.3h-21z" fill="#dddfe3"/><rect x="0.5" y="5" width="21" height="6.5" rx="0.8" fill="url(#g7)"/><rect x="0.7" y="11.4" width="20.6" height="0.7" fill="#000" opacity="0.2"/><rect x="3.6" y="7.4" width="1.9" height="1.9" rx="0.6" fill="#3fe05a"/></svg>
<span style="left:94.7px;top:320px;transform:scaleX(0.8402);">C:</span>
<span style="left:818.5px;top:320px;transform:scaleX(0.9519);">BitLocker</span>
<span style="left:945.7px;top:320px;transform:scaleX(1.0028);">117 MB</span>
<span style="left:1110.5px;top:320px;transform:scaleX(0.9398);">442.47 GB</span>
<svg style="left:66px;top:352.3px;" width="22" height="13" viewBox="0 0 22 13"><defs><linearGradient id="g8" x1="0" y1="0" x2="0" y2="1"><stop offset="0" stop-color="#4a4a4a"/><stop offset="1" stop-color="#2b2b2b"/></linearGradient></defs><path d="M3.6 0.9h14.8l3.1 4.3h-21z" fill="#dddfe3"/><rect x="0.5" y="5" width="21" height="6.5" rx="0.8" fill="url(#g8)"/><rect x="0.7" y="11.4" width="20.6" height="0.7" fill="#000" opacity="0.2"/><rect x="3.6" y="7.4" width="1.9" height="1.9" rx="0.6" fill="#3fe05a"/></svg>
<span style="left:94.7px;top:346px;transform:scaleX(0.9227);">D:</span>
<span style="left:818.5px;top:346px;transform:scaleX(0.9519);">BitLocker</span>
<span style="left:945.7px;top:346px;transform:scaleX(0.9398);">442.58 GB</span>
<span style="left:1110.5px;top:346px;transform:scaleX(0.9355);">488.28 GB</span>
<svg style="left:66px;top:378.3px;" width="22" height="13" viewBox="0 0 22 13"><defs><linearGradient id="g9" x1="0" y1="0" x2="0" y2="1"><stop offset="0" stop-color="#4a4a4a"/><stop offset="1" stop-color="#2b2b2b"/></linearGradient></defs><path d="M3.6 0.9h14.8l3.1 4.3h-21z" fill="#dddfe3"/><rect x="0.5" y="5" width="21" height="6.5" rx="0.8" fill="url(#g9)"/><rect x="0.7" y="11.4" width="20.6" height="0.7" fill="#000" opacity="0.2"/><rect x="3.6" y="7.4" width="1.9" height="1.9" rx="0.6" fill="#3fe05a"/></svg>
<span style="left:94.7px;top:372px;">Windows </span>
<span class="cj" style="left:179.05px;top:372.9px;">恢复分区</span>
<svg style="left:549px;top:382px;" width="7" height="4" viewBox="0 0 7 4"><path d="M0 0h7l-3.5 4z" fill="#000"/></svg>
<span style="left:818.5px;top:372px;transform:scaleX(0.8743);">NTFS</span>
<span style="left:945.7px;top:372px;transform:scaleX(0.9355);">930.86 GB</span>
<span style="left:1110.5px;top:372px;transform:scaleX(0.9825);">665 MB</span>
<svg style="left:65px;top:397px;" width="25" height="26" viewBox="0 0 25 26"><path d="M0.6 4.8l10.4-3.6l12.6 4v3.4l-11.4 4.6l-11.6-5z" fill="#fdfdff" stroke="#b4b4e6" stroke-width="1"/><path d="M12.2 9.8l11.4-4.6v3.4l-11.4 4.6z" fill="#d3d3fa"/><path d="M0.6 4.8l11.6 5l11.4-4.6M12.2 9.8v3.4" fill="none" stroke="#b4b4e6" stroke-width="1"/><path d="M7.4 15.5v-4.4a3.2 3.2 0 0 1 3.2-3.2h1.2a3.2 3.2 0 0 1 3.2 3.2v4.8" fill="none" stroke="#4b4b52" stroke-width="2.1"/><rect x="0.5" y="15.4" width="12.2" height="9.2" rx="0.8" fill="#6fd41a" stroke="#5bb812" stroke-width="1"/><path d="M5.6 18.3h2l-.6 1.3v2.4h-0.8v-2.4z" fill="#3f9a0c"/></svg>
<span style="left:94.7px;top:398px;transform:scaleX(0.9519);">BitLocker</span>
<svg style="left:549px;top:408px;" width="7" height="4" viewBox="0 0 7 4"><path d="M0 0h7l-3.5 4z" fill="#000"/></svg>
<span class="cj" style="left:564.25px;top:398.9px;">新加卷</span>
<span style="left:818.5px;top:398px;transform:scaleX(0.8743);">NTFS</span>
<span style="left:945.7px;top:398px;transform:scaleX(0.9488);">0 Bytes</span>
<span style="left:1110.5px;top:398px;transform:scaleX(0.9355);">488.28 GB</span>
<svg style="left:65px;top:423px;" width="25" height="26" viewBox="0 0 25 26"><path d="M0.6 4.8l10.4-3.6l12.6 4v3.4l-11.4 4.6l-11.6-5z" fill="#fdfdff" stroke="#b4b4e6" stroke-width="1"/><path d="M12.2 9.8l11.4-4.6v3.4l-11.4 4.6z" fill="#d3d3fa"/><path d="M0.6 4.8l11.6 5l11.4-4.6M12.2 9.8v3.4" fill="none" stroke="#b4b4e6" stroke-width="1"/><path d="M7.4 15.5v-4.4a3.2 3.2 0 0 1 3.2-3.2h1.2a3.2 3.2 0 0 1 3.2 3.2v4.8" fill="none" stroke="#4b4b52" stroke-width="2.1"/><rect x="0.5" y="15.4" width="12.2" height="9.2" rx="0.8" fill="#6fd41a" stroke="#5bb812" stroke-width="1"/><path d="M5.6 18.3h2l-.6 1.3v2.4h-0.8v-2.4z" fill="#3f9a0c"/></svg>
<span style="left:94.7px;top:424px;transform:scaleX(0.9519);">BitLocker</span>
<svg style="left:549px;top:434px;" width="7" height="4" viewBox="0 0 7 4"><path d="M0 0h7l-3.5 4z" fill="#000"/></svg>
<span style="left:818.5px;top:424px;transform:scaleX(0.8743);">NTFS</span>
<span style="left:945.7px;top:424px;transform:scaleX(0.9488);">0 Bytes</span>
<span style="left:1110.5px;top:424px;transform:scaleX(0.9355);">930.75 GB</span>
<svg style="left:25px;top:458px;" width="13" height="8" viewBox="0 0 13 8"><path d="M0.7 0.8L6.5 6.8L12.3 0.8" fill="none" stroke="#3c3c3c" stroke-width="1.5"/></svg>
<svg style="left:45px;top:450px;" width="25" height="21" viewBox="0 0 25 21"><defs><linearGradient id="g10" x1="0" y1="0" x2="1" y2="1"><stop offset="0.08" stop-color="#f00010"/><stop offset="0.85" stop-color="#f00010" stop-opacity="0"/></linearGradient></defs><path d="M0.6 8.6h21.4v10.2h-21.4v-3l1.7-0.6v-2.8l-1.7-0.6z" fill="#f2f2f2" stroke="#1a1a1a" stroke-width="1.1"/><rect x="4.4" y="10.2" width="16.4" height="6.8" rx="0.8" fill="#fff" stroke="#1a1a1a" stroke-width="1.1"/><rect x="6.4" y="12.2" width="12.4" height="2.8" fill="#8c8c8c"/><path d="M23 10v2M23 12.8v2M23 15.6v2" stroke="#f0a020" stroke-width="1.1"/><rect x="0" y="0" width="12" height="11.5" fill="url(#g10)"/></svg>
<span style="left:74.7px;top:450px;transform:scaleX(0.9640);">WD Green SN350 1TB 33006000</span>
<span style="left:564.5px;top:450px;transform:scaleX(1.0103);">231736802532</span>
<span style="left:818.5px;top:450px;transform:scaleX(0.9229);">#1 NVME, SSD</span>
<span style="left:1110.5px;top:450px;transform:scaleX(0.9398);">931.51 GB</span>
<svg style="left:66px;top:482.3px;" width="22" height="13" viewBox="0 0 22 13"><defs><linearGradient id="g11" x1="0" y1="0" x2="0" y2="1"><stop offset="0" stop-color="#4a4a4a"/><stop offset="1" stop-color="#2b2b2b"/></linearGradient></defs><path d="M3.6 0.9h14.8l3.1 4.3h-21z" fill="#dddfe3"/><rect x="0.5" y="5" width="21" height="6.5" rx="0.8" fill="url(#g11)"/><rect x="0.7" y="11.4" width="20.6" height="0.7" fill="#000" opacity="0.2"/><rect x="3.6" y="7.4" width="1.9" height="1.9" rx="0.6" fill="#3fe05a"/></svg>
<span style="left:94.7px;top:476px;transform:scaleX(0.7688);">E:</span>
<span style="left:818.5px;top:476px;transform:scaleX(0.9519);">BitLocker</span>
<span style="left:945.7px;top:476px;transform:scaleX(0.9663);">1 MB</span>
<span style="left:1110.5px;top:476px;transform:scaleX(0.9387);">468.75 GB</span>
<svg style="left:66px;top:508.3px;" width="22" height="13" viewBox="0 0 22 13"><defs><linearGradient id="g12" x1="0" y1="0" x2="0" y2="1"><stop offset="0" stop-color="#4a4a4a"/><stop offset="1" stop-color="#2b2b2b"/></linearGradient></defs><path d="M3.6 0.9h14.8l3.1 4.3h-21z" fill="#dddfe3"/><rect x="0.5" y="5" width="21" height="6.5" rx="0.8" fill="url(#g12)"/><rect x="0.7" y="11.4" width="20.6" height="0.7" fill="#000" opacity="0.2"/><rect x="3.6" y="7.4" width="1.9" height="1.9" rx="0.6" fill="#3fe05a"/></svg>
<span style="left:94.7px;top:502px;transform:scaleX(0.7969);">F:</span>
<span style="left:818.5px;top:502px;transform:scaleX(0.9519);">BitLocker</span>
<span style="left:945.7px;top:502px;transform:scaleX(0.9387);">468.75 GB</span>
<span style="left:1110.5px;top:502px;transform:scaleX(0.9387);">462.76 GB</span>
<svg style="left:65px;top:527px;" width="25" height="26" viewBox="0 0 25 26"><path d="M0.6 4.8l10.4-3.6l12.6 4v3.4l-11.4 4.6l-11.6-5z" fill="#fdfdff" stroke="#b4b4e6" stroke-width="1"/><path d="M12.2 9.8l11.4-4.6v3.4l-11.4 4.6z" fill="#d3d3fa"/><path d="M0.6 4.8l11.6 5l11.4-4.6M12.2 9.8v3.4" fill="none" stroke="#b4b4e6" stroke-width="1"/><path d="M7.4 15.5v-4.4a3.2 3.2 0 0 1 3.2-3.2h1.2a3.2 3.2 0 0 1 3.2 3.2v4.8" fill="none" stroke="#4b4b52" stroke-width="2.1"/><rect x="0.5" y="15.4" width="12.2" height="9.2" rx="0.8" fill="#6fd41a" stroke="#5bb812" stroke-width="1"/><path d="M5.6 18.3h2l-.6 1.3v2.4h-0.8v-2.4z" fill="#3f9a0c"/></svg>
<span style="left:94.7px;top:528px;transform:scaleX(0.9519);">BitLocker</span>
<svg style="left:549px;top:538px;" width="7" height="4" viewBox="0 0 7 4"><path d="M0 0h7l-3.5 4z" fill="#000"/></svg>
<span class="cj" style="left:564.25px;top:528.9px;">新加卷</span>
<span style="left:818.5px;top:528px;transform:scaleX(0.8743);">NTFS</span>
<span style="left:945.7px;top:528px;transform:scaleX(0.9488);">0 Bytes</span>
<span style="left:1110.5px;top:528px;transform:scaleX(0.9387);">462.76 GB</span>
<svg style="left:65px;top:553px;" width="25" height="26" viewBox="0 0 25 26"><path d="M0.6 4.8l10.4-3.6l12.6 4v3.4l-11.4 4.6l-11.6-5z" fill="#fdfdff" stroke="#b4b4e6" stroke-width="1"/><path d="M12.2 9.8l11.4-4.6v3.4l-11.4 4.6z" fill="#d3d3fa"/><path d="M0.6 4.8l11.6 5l11.4-4.6M12.2 9.8v3.4" fill="none" stroke="#b4b4e6" stroke-width="1"/><path d="M7.4 15.5v-4.4a3.2 3.2 0 0 1 3.2-3.2h1.2a3.2 3.2 0 0 1 3.2 3.2v4.8" fill="none" stroke="#4b4b52" stroke-width="2.1"/><rect x="0.5" y="15.4" width="12.2" height="9.2" rx="0.8" fill="#6fd41a" stroke="#5bb812" stroke-width="1"/><path d="M5.6 18.3h2l-.6 1.3v2.4h-0.8v-2.4z" fill="#3f9a0c"/></svg>
<span style="left:94.7px;top:554px;transform:scaleX(0.9519);">BitLocker</span>
<svg style="left:549px;top:564px;" width="7" height="4" viewBox="0 0 7 4"><path d="M0 0h7l-3.5 4z" fill="#000"/></svg>
<span class="cj" style="left:564.25px;top:554.9px;">新加卷</span>
<span style="left:818.5px;top:554px;transform:scaleX(0.8743);">NTFS</span>
<span style="left:945.7px;top:554px;transform:scaleX(0.9488);">0 Bytes</span>
<span style="left:1110.5px;top:554px;transform:scaleX(0.9387);">468.75 GB</span>
<svg style="left:46px;top:586.3px;" width="22" height="13" viewBox="0 0 22 13"><defs><linearGradient id="g13" x1="0" y1="0" x2="0" y2="1"><stop offset="0" stop-color="#4a4a4a"/><stop offset="1" stop-color="#2b2b2b"/></linearGradient></defs><path d="M3.6 0.9h14.8l3.1 4.3h-21z" fill="#dddfe3"/><rect x="0.5" y="5" width="21" height="6.5" rx="0.8" fill="url(#g13)"/><rect x="0.7" y="11.4" width="20.6" height="0.7" fill="#000" opacity="0.2"/><rect x="3.6" y="7.4" width="1.9" height="1.9" rx="0.6" fill="#3fe05a"/></svg>
<span style="left:74.7px;top:580px;transform:scaleX(0.8736);">I:</span>
<span style="left:818.5px;top:580px;transform:scaleX(0.8617);">exFAT</span>
<span style="left:945.7px;top:580px;transform:scaleX(0.9633);">512 Bytes</span>
<span style="left:1110.5px;top:580px;transform:scaleX(0.9261);">40.00 GB</span>
<svg style="left:25px;top:614px;" width="13" height="8" viewBox="0 0 13 8"><path d="M0.7 0.8L6.5 6.8L12.3 0.8" fill="none" stroke="#3c3c3c" stroke-width="1.5"/></svg>
<svg style="left:45px;top:605.5px;" width="24" height="24" viewBox="0 0 24 24"><defs><linearGradient id="g14" x1="0" y1="0" x2="1" y2="1"><stop offset="0.1" stop-color="#00c400"/><stop offset="0.9" stop-color="#00c400" stop-opacity="0"/></linearGradient></defs><rect x="2.5" y="1.6" width="19" height="21.4" rx="1.6" fill="#cbcbcb" stroke="#2a2a2a" stroke-width="1.2"/><rect x="3.2" y="19.7" width="17.6" height="2.6" fill="#e4e4e4"/><path d="M2.5 19.4h19" stroke="#2a2a2a" stroke-width="1.1"/><rect x="18.2" y="20.4" width="1.6" height="1.5" fill="#3fd64a"/><circle cx="4.9" cy="4" r="0.55" fill="#444"/><circle cx="19.1" cy="4" r="0.55" fill="#444"/><circle cx="19.1" cy="17.6" r="0.55" fill="#444"/><g stroke="#4a4a4a" stroke-width="1.2" fill="none"><path d="M11.3 5.5v11"/><path d="M11.3 13.6l-4-1.6v-2.3"/><path d="M11.3 12l4.6-2v-2.2"/></g><path d="M11.3 3.6l1.5 2.4h-3z" fill="#4a4a4a"/><circle cx="11.3" cy="16.7" r="1.5" fill="#4a4a4a"/><rect x="6.5" y="8.6" width="1.7" height="1.7" fill="#4a4a4a"/><circle cx="15.9" cy="7.3" r="1" fill="#4a4a4a"/><rect x="0" y="0" width="12" height="12" fill="url(#g14)"/></svg>
<span style="left:74.7px;top:606px;transform:scaleX(0.9455);">WDC WD5000LUCT-62C26Y0 06.NEK.1</span>
<span style="left:564.5px;top:606px;transform:scaleX(0.9864);">WD-WX61E1475232</span>
<span style="left:818.5px;top:606px;transform:scaleX(0.9267);">#2 USB, HDD</span>
<span style="left:1110.5px;top:606px;transform:scaleX(0.9387);">465.76 GB</span>
<svg style="left:66px;top:638.3px;" width="22" height="13" viewBox="0 0 22 13"><defs><linearGradient id="g15" x1="0" y1="0" x2="0" y2="1"><stop offset="0" stop-color="#4a4a4a"/><stop offset="1" stop-color="#2b2b2b"/></linearGradient></defs><path d="M3.6 0.9h14.8l3.1 4.3h-21z" fill="#dddfe3"/><rect x="0.5" y="5" width="21" height="6.5" rx="0.8" fill="url(#g15)"/><rect x="0.7" y="11.4" width="20.6" height="0.7" fill="#000" opacity="0.2"/><rect x="3.6" y="7.4" width="1.9" height="1.9" rx="0.6" fill="#3fe05a"/></svg>
<span style="left:94.7px;top:632px;transform:scaleX(0.8601);">G:</span>
<svg style="left:549px;top:642px;" width="7" height="4" viewBox="0 0 7 4"><path d="M0 0h7l-3.5 4z" fill="#000"/></svg>
<span style="left:564.5px;top:632px;transform:scaleX(0.8205);">KESU</span>
<span style="left:818.5px;top:632px;transform:scaleX(0.8743);">NTFS</span>
<span style="left:945.7px;top:632px;transform:scaleX(0.9663);">1 MB</span>
<span style="left:1110.5px;top:632px;transform:scaleX(0.9387);">465.76 GB</span>
<svg style="left:25px;top:666px;" width="13" height="8" viewBox="0 0 13 8"><path d="M0.7 0.8L6.5 6.8L12.3 0.8" fill="none" stroke="#3c3c3c" stroke-width="1.5"/></svg>
<svg style="left:45px;top:657.5px;" width="24" height="24" viewBox="0 0 24 24"><defs><linearGradient id="g16" x1="0" y1="0" x2="1" y2="1"><stop offset="0.1" stop-color="#00c400"/><stop offset="0.9" stop-color="#00c400" stop-opacity="0"/></linearGradient></defs><rect x="2.5" y="1.6" width="19" height="21.4" rx="1.6" fill="#cbcbcb" stroke="#2a2a2a" stroke-width="1.2"/><rect x="3.2" y="19.7" width="17.6" height="2.6" fill="#e4e4e4"/><path d="M2.5 19.4h19" stroke="#2a2a2a" stroke-width="1.1"/><rect x="18.2" y="20.4" width="1.6" height="1.5" fill="#3fd64a"/><circle cx="4.9" cy="4" r="0.55" fill="#444"/><circle cx="19.1" cy="4" r="0.55" fill="#444"/><circle cx="19.1" cy="17.6" r="0.55" fill="#444"/><g stroke="#4a4a4a" stroke-width="1.2" fill="none"><path d="M11.3 5.5v11"/><path d="M11.3 13.6l-4-1.6v-2.3"/><path d="M11.3 12l4.6-2v-2.2"/></g><path d="M11.3 3.6l1.5 2.4h-3z" fill="#4a4a4a"/><circle cx="11.3" cy="16.7" r="1.5" fill="#4a4a4a"/><rect x="6.5" y="8.6" width="1.7" height="1.7" fill="#4a4a4a"/><circle cx="15.9" cy="7.3" r="1" fill="#4a4a4a"/><rect x="0" y="0" width="12" height="12" fill="url(#g16)"/></svg>
<span style="left:74.7px;top:658px;transform:scaleX(0.9630);">WDC WD5000LUCT-62C26Y0 01.01A01</span>
<span style="left:564.5px;top:658px;transform:scaleX(0.9849);">WD-WX31A942ZK58</span>
<span style="left:818.5px;top:658px;transform:scaleX(0.9267);">#3 USB, HDD</span>
<span style="left:1110.5px;top:658px;transform:scaleX(0.9387);">465.76 GB</span>
<svg style="left:66px;top:690.3px;" width="22" height="13" viewBox="0 0 22 13"><defs><linearGradient id="g17" x1="0" y1="0" x2="0" y2="1"><stop offset="0" stop-color="#4a4a4a"/><stop offset="1" stop-color="#2b2b2b"/></linearGradient></defs><path d="M3.6 0.9h14.8l3.1 4.3h-21z" fill="#dddfe3"/><rect x="0.5" y="5" width="21" height="6.5" rx="0.8" fill="url(#g17)"/><rect x="0.7" y="11.4" width="20.6" height="0.7" fill="#000" opacity="0.2"/><rect x="3.6" y="7.4" width="1.9" height="1.9" rx="0.6" fill="#3fe05a"/></svg>
<span style="left:94.7px;top:684px;transform:scaleX(0.9315);">H:</span>
<svg style="left:549px;top:694px;" width="7" height="4" viewBox="0 0 7 4"><path d="M0 0h7l-3.5 4z" fill="#000"/></svg>
<span style="left:564.5px;top:684px;transform:scaleX(0.8205);">KESU</span>
<span style="left:818.5px;top:684px;transform:scaleX(0.8743);">NTFS</span>
<span style="left:945.7px;top:684px;transform:scaleX(0.9663);">1 MB</span>
<span style="left:1110.5px;top:684px;transform:scaleX(0.9387);">465.76 GB</span>
<svg style="left:25px;top:718px;" width="13" height="8" viewBox="0 0 13 8"><path d="M0.7 0.8L6.5 6.8L12.3 0.8" fill="none" stroke="#3c3c3c" stroke-width="1.5"/></svg>
<svg style="left:46px;top:713px;" width="22" height="18" viewBox="0 0 22 18"><defs><linearGradient id="g18" x1="0" y1="0" x2="0.6" y2="1"><stop offset="0" stop-color="#ffe596"/><stop offset="1" stop-color="#ffd05c"/></linearGradient></defs><path d="M0.6 1.4a1 1 0 0 1 1-1h5.6a1.4 1.4 0 0 1 1 .4l2.6 2.6v2h-10.2z" fill="#f6b51e"/><path d="M0.6 4.4l8-0.2l1.6-1.8h9.9a1 1 0 0 1 1 1v12.2a1 1 0 0 1-1 1h-18.5a1 1 0 0 1-1-1z" fill="url(#g18)"/><path d="M0.8 16.2h20.1" stroke="#eebb45" stroke-width="0.8"/></svg>
<span class="cj" style="left:74.45px;top:710.9px;">镜像文件</span>
<svg style="left:45px;top:744px;" width="13" height="8" viewBox="0 0 13 8"><path d="M0.7 0.8L6.5 6.8L12.3 0.8" fill="none" stroke="#3c3c3c" stroke-width="1.5"/></svg>
<svg style="left:66px;top:739px;" width="22" height="18" viewBox="0 0 22 18"><defs><linearGradient id="g19" x1="0" y1="0" x2="0.6" y2="1"><stop offset="0" stop-color="#ffe596"/><stop offset="1" stop-color="#ffd05c"/></linearGradient></defs><path d="M0.6 1.4a1 1 0 0 1 1-1h5.6a1.4 1.4 0 0 1 1 .4l2.6 2.6v2h-10.2z" fill="#f6b51e"/><path d="M0.6 4.4l8-0.2l1.6-1.8h9.9a1 1 0 0 1 1 1v12.2a1 1 0 0 1-1 1h-18.5a1 1 0 0 1-1-1z" fill="url(#g19)"/><path d="M0.8 16.2h20.1" stroke="#eebb45" stroke-width="0.8"/></svg>
<span style="left:94.7px;top:736px;transform:scaleX(1.0529);">I:/</span>
<span class="cj" style="left:111.56px;top:736.9px;">检材</span>
<span style="left:147.81px;top:736px;transform:scaleX(0.9659);"> U</span>
<span class="cj" style="left:166.4px;top:736.9px;">盘</span>
<span style="left:184.65px;top:736px;transform:scaleX(1.0827);">/U</span>
<span class="cj" style="left:205.51px;top:736.9px;">盘检材</span>
<span style="left:259.76px;top:736px;transform:scaleX(1.0069);">.dd</span>
<span class="cj" style="left:564.25px;top:736.9px;">镜像</span>
<span style="left:1110.5px;top:736px;transform:scaleX(0.8772);">1 GB</span>
<svg style="left:86px;top:768.3px;" width="22" height="13" viewBox="0 0 22 13"><defs><linearGradient id="g20" x1="0" y1="0" x2="0" y2="1"><stop offset="0" stop-color="#4a4a4a"/><stop offset="1" stop-color="#2b2b2b"/></linearGradient></defs><path d="M3.6 0.9h14.8l3.1 4.3h-21z" fill="#dddfe3"/><rect x="0.5" y="5" width="21" height="6.5" rx="0.8" fill="url(#g20)"/><rect x="0.7" y="11.4" width="20.6" height="0.7" fill="#000" opacity="0.2"/><rect x="3.6" y="7.4" width="1.9" height="1.9" rx="0.6" fill="#3fe05a"/></svg>
<span style="left:114.7px;top:762px;transform:scaleX(1.0026);">Partition1</span>
<span style="left:945.7px;top:762px;transform:scaleX(0.9663);">1 MB</span>
<span style="left:1110.5px;top:762px;transform:scaleX(0.9929);">427 MB</span>
<svg style="left:65px;top:796px;" width="13" height="8" viewBox="0 0 13 8"><path d="M0.7 0.8L6.5 6.8L12.3 0.8" fill="none" stroke="#3c3c3c" stroke-width="1.5"/></svg>
<svg style="left:86px;top:794.3px;" width="22" height="13" viewBox="0 0 22 13"><defs><linearGradient id="g21" x1="0" y1="0" x2="0" y2="1"><stop offset="0" stop-color="#4a4a4a"/><stop offset="1" stop-color="#2b2b2b"/></linearGradient></defs><path d="M3.6 0.9h14.8l3.1 4.3h-21z" fill="#dddfe3"/><rect x="0.5" y="5" width="21" height="6.5" rx="0.8" fill="url(#g21)"/><rect x="0.7" y="11.4" width="20.6" height="0.7" fill="#000" opacity="0.2"/><rect x="3.6" y="7.4" width="1.9" height="1.9" rx="0.6" fill="#3fe05a"/></svg>
<span style="left:114.7px;top:788px;font-weight:bold;transform:scaleX(0.9823);">Partition2</span>
<span style="left:945.7px;top:788px;font-weight:bold;transform:scaleX(1.0026);">428.06 MB</span>
<span style="left:1110.5px;top:788px;font-weight:bold;transform:scaleX(1.0110);">458 MB</span>
<svg style="left:105px;top:820px;" width="26" height="20" viewBox="0 0 26 20"><path d="M0.6 5.8l10.4-4.6l12.6 4.8v3.6l-11.2 4.4l-11.8-4.6z" fill="#b9dbf6" stroke="#5aaef4" stroke-width="1"/><path d="M12.4 10.4l11.2-4.4v3.6l-11.2 4.4z" fill="#a5cff4"/><path d="M0.6 5.8l11.8 4.6l11.2-4.4" fill="none" stroke="#5aaef4" stroke-width="1"/><text x='1.2' y='17.8' font-family="'Liberation Sans',sans-serif" font-weight='bold' font-size='9.4' fill='#4a6a8c' textLength='20.6' lengthAdjust='spacingAndGlyphs'>Rec.</text></svg>
<span style="left:134.7px;top:815px;font-weight:bold;color:#0000ff;transform:scaleX(0.9500);">Recognized0</span>
<span class="cj" style="left:564.25px;top:815.9px;font-weight:bold;color:#0000ff;">新加卷</span>
<span style="left:818.5px;top:815px;font-weight:bold;color:#0000ff;transform:scaleX(0.9136);">NTFS</span>
<span style="left:945.7px;top:815px;font-weight:bold;color:#0000ff;transform:scaleX(0.9104);">0 Bytes</span>
<span style="left:1110.5px;top:815px;font-weight:bold;color:#0000ff;transform:scaleX(1.0140);">432.11 MB</span>
<svg style="left:85px;top:846px;" width="26" height="16" viewBox="0 0 26 16"><path d="M0.6 5.6l10.6-4.4l12.6 4.8v3l-11.2 4.6l-12-5z" fill="#fff" stroke="#6ab5f6" stroke-width="1"/><path d="M12.6 10.6l11.2-4.6v3l-11.2 4.6z" fill="#cfe6fb"/><path d="M0.6 5.6l12 5l11.2-4.6" fill="none" stroke="#6ab5f6" stroke-width="1"/></svg>
<span class="cj" style="left:114.75px;top:841.9px;">空的空间</span>
<span style="left:187px;top:841px;transform:scaleX(1.0050);">35</span>
<span style="left:945.7px;top:841px;transform:scaleX(0.9779);">886.06 MB</span>
<span style="left:1110.5px;top:841px;transform:scaleX(0.9747);">137.94 MB</span>
<div style="left:1458px;top:178px;width:1px;height:37px;background:#e5e5e5;"></div>
<div style="left:1458px;top:215px;width:1px;height:366px;background:#d9d9d9;"></div>
<div style="left:1287px;top:240px;width:1271px;height:1px;background:#d9d9d9;"></div>
<div style="left:1287px;top:266px;width:1271px;height:1px;background:#d9d9d9;"></div>
<div style="left:1287px;top:292px;width:1271px;height:1px;background:#d9d9d9;"></div>
<div style="left:1287px;top:318px;width:1271px;height:1px;background:#d9d9d9;"></div>
<div style="left:1287px;top:344px;width:1271px;height:1px;background:#d9d9d9;"></div>
<div style="left:1287px;top:371px;width:1271px;height:1px;background:#d9d9d9;"></div>
<div style="left:1287px;top:397px;width:1271px;height:1px;background:#d9d9d9;"></div>
<div style="left:1287px;top:423px;width:1271px;height:1px;background:#d9d9d9;"></div>
<div style="left:1287px;top:449px;width:1271px;height:1px;background:#d9d9d9;"></div>
<div style="left:1287px;top:475px;width:1271px;height:1px;background:#d9d9d9;"></div>
<div style="left:1287px;top:502px;width:1271px;height:1px;background:#d9d9d9;"></div>
<div style="left:1287px;top:528px;width:1271px;height:1px;background:#d9d9d9;"></div>
<div style="left:1287px;top:554px;width:1271px;height:1px;background:#d9d9d9;"></div>
<div style="left:1287px;top:580px;width:1271px;height:1px;background:#d9d9d9;"></div>
<span class="cj" style="left:1291.75px;top:184.9px;">名称</span>
<span class="cj" style="left:1464.75px;top:184.9px;">值</span>
<span class="cj" style="left:1309.25px;top:216.9px;">驱动类型</span>
<span class="cj" style="left:1461.25px;top:216.9px;color:#8a8a8a;">分区</span>
<span class="cj" style="left:1309.25px;top:242.9px;">名称</span>
<span style="left:1461.5px;top:242px;transform:scaleX(0.9730);">Recognized0</span>
<svg style="left:2551px;top:256px;" width="3" height="6" viewBox="0 0 3 6"><path d="M0 0l3 3l-3 3z" fill="#000"/></svg>
<span class="cj" style="left:1309.25px;top:268.9px;">大小</span>
<span style="left:1461.5px;top:268px;transform:scaleX(0.9734);">458 MB (937984 Sectors)</span>
<svg style="left:2551px;top:282px;" width="3" height="6" viewBox="0 0 3 6"><path d="M0 0l3 3l-3 3z" fill="#000"/></svg>
<span class="cj" style="left:1309.25px;top:294.9px;">分区偏移</span>
<span style="left:1461.5px;top:294px;transform:scaleX(0.9488);">0 Bytes</span>
<svg style="left:2551px;top:308px;" width="3" height="6" viewBox="0 0 3 6"><path d="M0 0l3 3l-3 3z" fill="#000"/></svg>
<span class="cj" style="left:1309.25px;top:320.9px;">分区大小</span>
<span style="left:1461.5px;top:320px;transform:scaleX(0.9734);">458 MB (937984 Sectors)</span>
<svg style="left:2551px;top:334px;" width="3" height="6" viewBox="0 0 3 6"><path d="M0 0l3 3l-3 3z" fill="#000"/></svg>
<svg style="left:1290.5px;top:354px;" width="13" height="8" viewBox="0 0 13 8"><path d="M0.7 0.8L6.5 6.8L12.3 0.8" fill="none" stroke="#3c3c3c" stroke-width="1.5"/></svg>
<span class="cj" style="left:1309.25px;top:346.9px;font-weight:bold;">已识别</span>
<span style="left:1363.5px;top:346px;font-weight:bold;transform:scaleX(1.0604);"> </span>
<span style="left:1369.24px;top:346px;font-weight:bold;transform:scaleX(0.8213);">FS</span>
<span class="cj" style="left:1329.25px;top:373.9px;">解析的引导记录</span>
<span style="left:1461.5px;top:373px;color:#8a8a8a;transform:scaleX(0.9517);">0</span>
<span class="cj" style="left:1329.25px;top:399.9px;">已剖析的元文件</span>
<span style="left:1461.5px;top:399px;color:#8a8a8a;transform:scaleX(0.9979);">42</span>
<span class="cj" style="left:1329.25px;top:425.9px;">估计的文件数</span>
<span style="left:1461.5px;top:425px;color:#8a8a8a;transform:scaleX(0.9703);">1620</span>
<span class="cj" style="left:1329.25px;top:451.9px;">估计大小</span>
<span style="left:1461.5px;top:451px;transform:scaleX(0.9788);">432.11 MB (884952 Sectors)</span>
<svg style="left:2551px;top:465px;" width="3" height="6" viewBox="0 0 3 6"><path d="M0 0l3 3l-3 3z" fill="#000"/></svg>
<svg style="left:1290.5px;top:485px;" width="13" height="8" viewBox="0 0 13 8"><path d="M0.7 0.8L6.5 6.8L12.3 0.8" fill="none" stroke="#3c3c3c" stroke-width="1.5"/></svg>
<span style="left:1309.5px;top:477px;font-weight:bold;transform:scaleX(0.9320);">NTFS </span>
<span class="cj" style="left:1361.75px;top:477.9px;font-weight:bold;">信息</span>
<span class="cj" style="left:1329.25px;top:504.9px;">集群大小</span>
<span style="left:1461.5px;top:504px;transform:scaleX(0.9271);">4 KB (8 Sectors)</span>
<svg style="left:2545px;top:514px;" width="7" height="4" viewBox="0 0 7 4"><path d="M0 0h7l-3.5 4z" fill="#000"/></svg>
<span style="left:1329.5px;top:530px;transform:scaleX(0.9638);">MFT </span>
<span class="cj" style="left:1372.75px;top:530.9px;">记录大小</span>
<span style="left:1461.5px;top:530px;transform:scaleX(0.8579);">1 KB</span>
<svg style="left:2545px;top:540px;" width="7" height="4" viewBox="0 0 7 4"><path d="M0 0h7l-3.5 4z" fill="#000"/></svg>
<span style="left:1329.5px;top:556px;transform:scaleX(0.9638);">MFT </span>
<span class="cj" style="left:1372.75px;top:556.9px;">位置</span>
<span style="left:1461.5px;top:556px;transform:scaleX(0.9679);">152.66 MB (312656 Sectors)</span>
<svg style="left:2551px;top:570px;" width="3" height="6" viewBox="0 0 3 6"><path d="M0 0l3 3l-3 3z" fill="#000"/></svg>
<span class="ct" style="left:1332px;top:976.4px;">属性</span>
<span class="ct" style="left:1432px;top:975.4px;letter-spacing:-0.4px;">扫描信息</span>
<svg style="left:0px;top:0px;pointer-events:none" width="2560" height="1368" viewBox="0 0 2560 1368"><path d="M1925 663L1640 525" stroke="#ed1c24" stroke-width="6.5" stroke-linecap="round" fill="none"/><path d="M1620 515.4L1650 516.3L1639.6 537.6Z" fill="#ed1c24"/><path d="M1665.5 657.3L1583 598" stroke="#ed1c24" stroke-width="6.5" stroke-linecap="round" fill="none"/><path d="M1564.3 585.2L1593.3 590.9L1579.4 610.6Z" fill="#ed1c24"/></svg>
<span class="ct" style="left:9px;top:1014.4px;color:#444;">日志</span>
<svg style="left:2542px;top:1022px;" width="8" height="8" viewBox="0 0 8 8"><path d="M0.5 0.5l7 7M7.5 0.5l-7 7" stroke="#000" stroke-width="1.5" fill="none"/></svg>
<div style="left:101px;top:1041px;width:1px;height:60px;background:#d9d9d9;"></div>
<div style="left:201px;top:1041px;width:1px;height:60px;background:#d9d9d9;"></div>
<div style="left:301px;top:1041px;width:1px;height:60px;background:#d9d9d9;"></div>
<div style="left:2px;top:1101px;width:2556px;height:1px;background:#d9d9d9;"></div>
<span class="cj" style="left:33.75px;top:1047.9px;">类型</span>
<span class="cj" style="left:133.75px;top:1047.9px;">日期</span>
<span class="cj" style="left:233.75px;top:1047.9px;">时间</span>
<span class="cj" style="left:1411.75px;top:1047.9px;">文本</span>
<svg style="left:5px;top:1077.2px;" width="24" height="24" viewBox="0 0 24 24"><circle cx="12" cy="12" r="11.5" fill="#fff" stroke="#3f90d2" stroke-width="1.1"/><path d="M7 6.8h7v11.8h3v1.9h-9.8v-1.9h3.1v-9.8h-3.3z" fill="#1a76c2"/><circle cx="12" cy="3.5" r="1.8" fill="#1a76c2"/></svg>
<span class="cj" style="left:34.75px;top:1077.9px;">系统</span>
<span style="left:104.5px;top:1077px;transform:scaleX(1.0210);">2025/10...</span>
<span style="left:204.5px;top:1077px;transform:scaleX(0.9664);">23:25:16</span>
<span class="cj" style="left:304.25px;top:1077.9px;">在</span>
<span style="left:322.5px;top:1077px;transform:scaleX(0.9468);">3s</span>
<span class="cj" style="left:341.75px;top:1077.9px;">中已完成对驱动器</span>
<span style="left:486px;top:1077px;transform:scaleX(1.0378);">Partition2</span>
<span class="cj" style="left:571.25px;top:1077.9px;">上丢失的分区的搜索</span>
<span class="cj" style="left:6.75px;top:1342.9px;">准备</span>
</body></html>
